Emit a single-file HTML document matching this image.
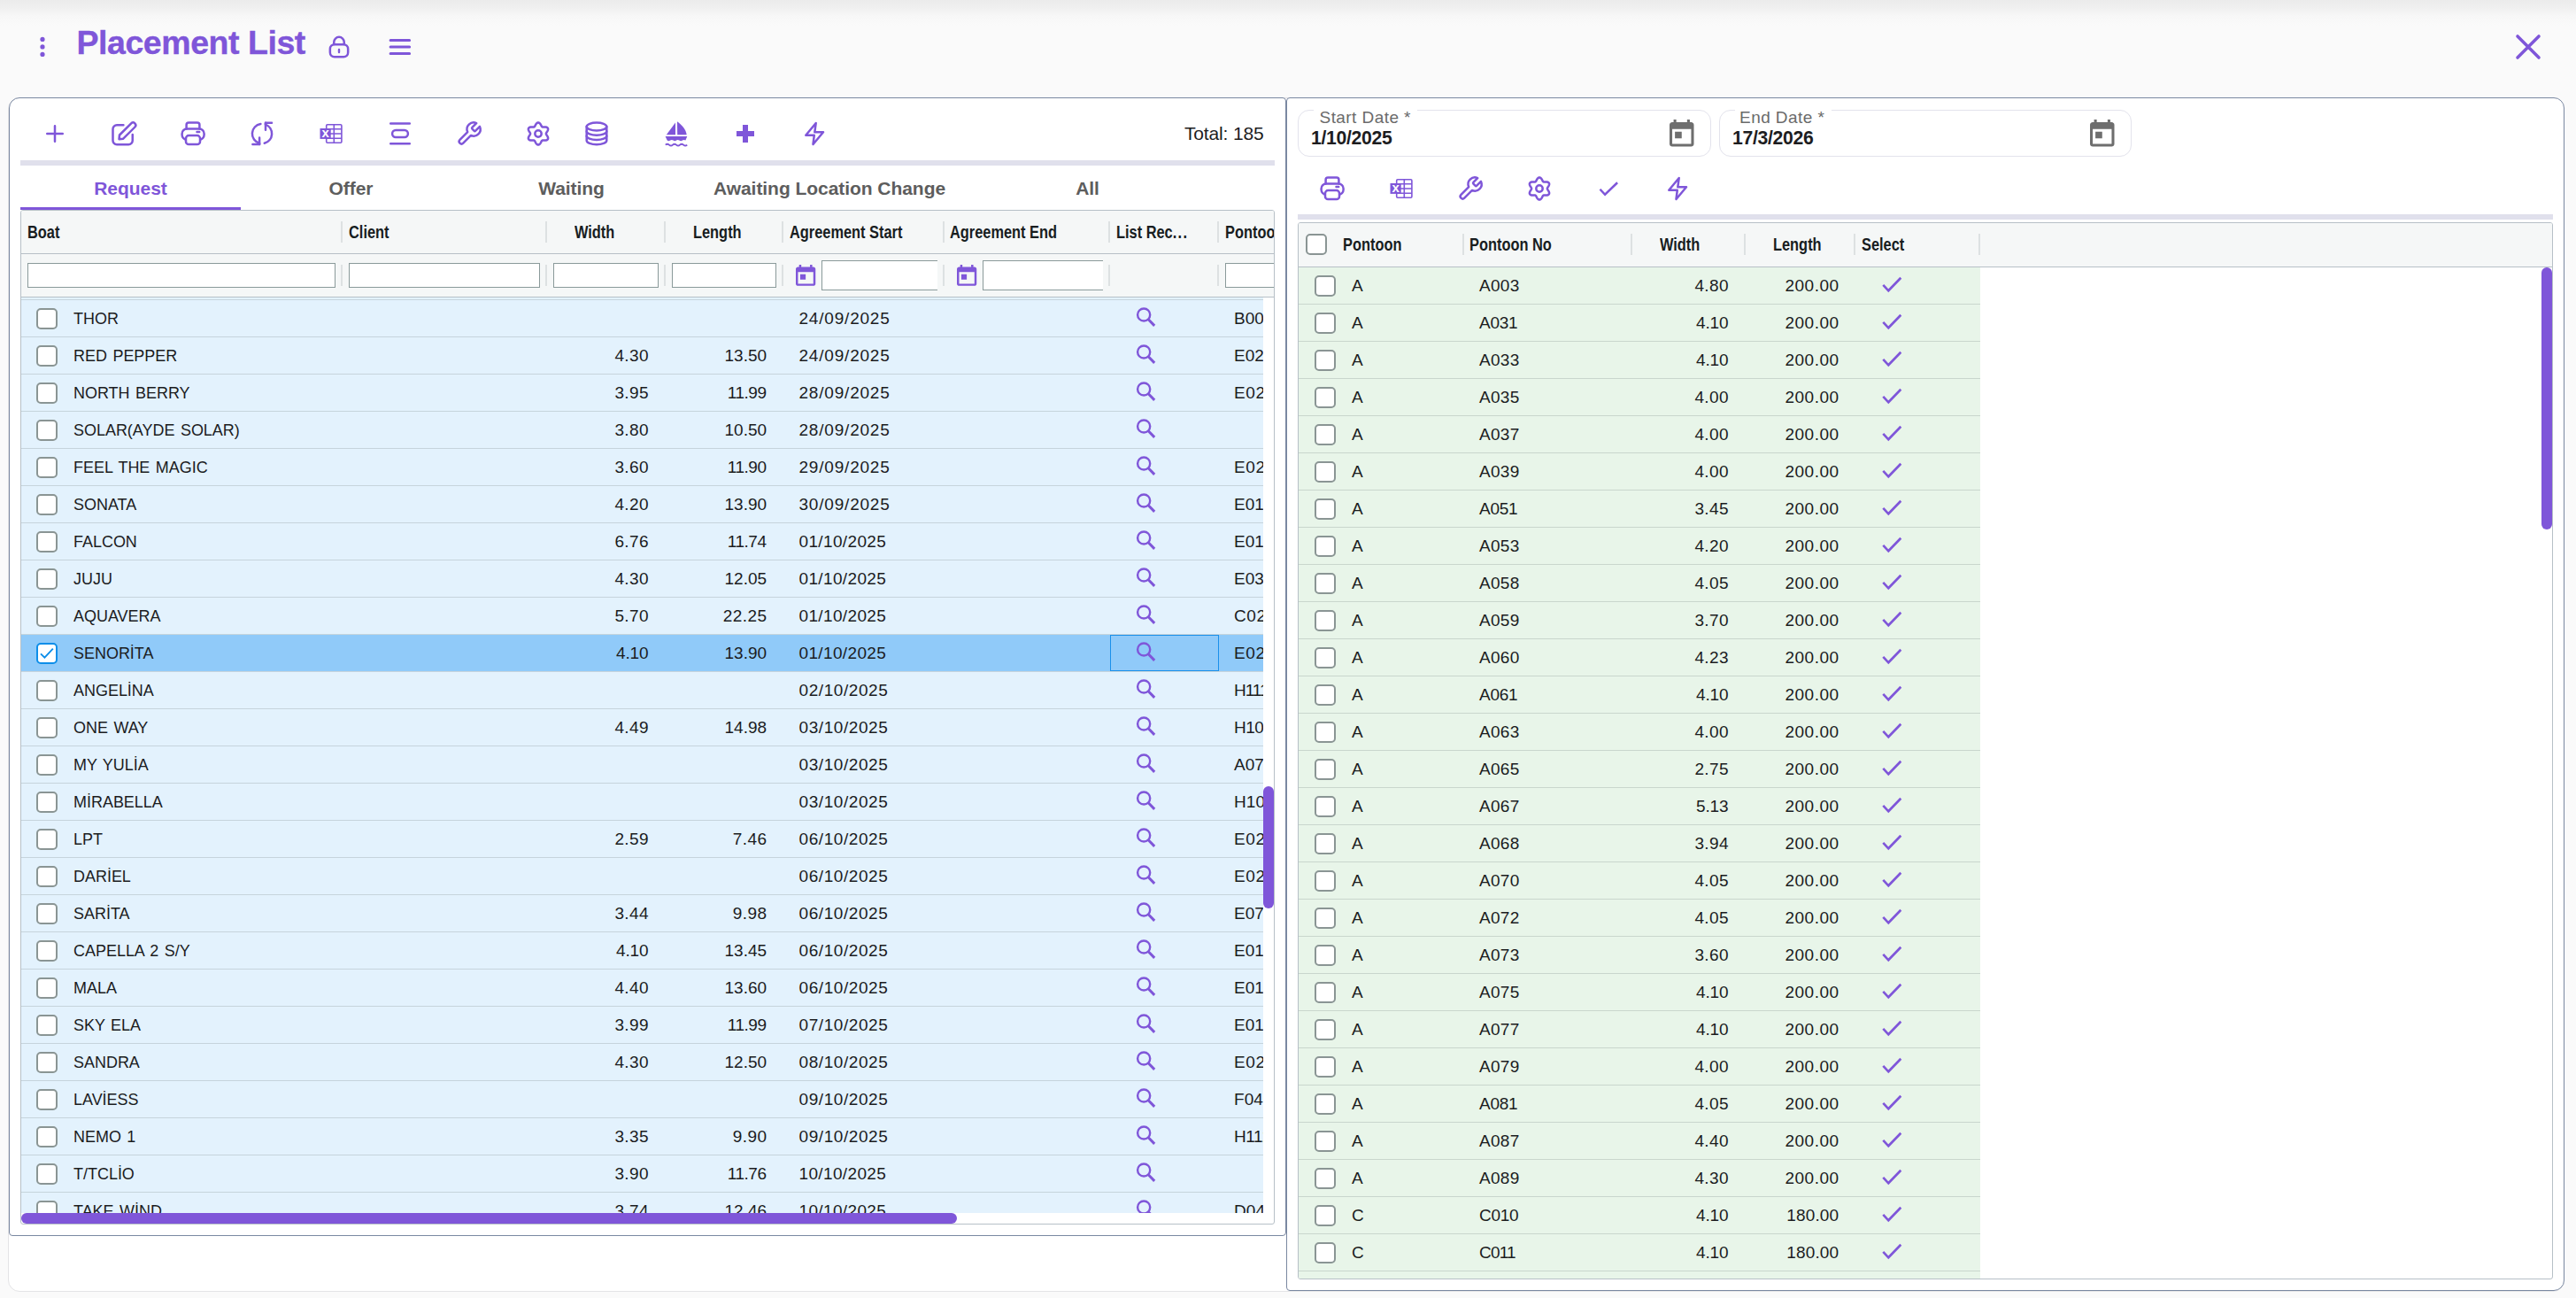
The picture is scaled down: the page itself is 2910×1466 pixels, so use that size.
<!DOCTYPE html><html lang="en"><head><meta charset="utf-8"><title>Placement List</title><style>
*{box-sizing:border-box}
html,body{margin:0;padding:0}
body{width:2910px;height:1466px;position:relative;overflow:hidden;background:#fafafa;font-family:"Liberation Sans",sans-serif;color:#1b1c1e}
.abs,.ic{position:absolute}
.ic{overflow:visible}
.topgrad{left:0;top:0;width:2910px;height:30px;background:linear-gradient(#ebebeb 0,#f0f0f0 9px,#f7f7f7 18px,#fafafa 29px)}
.title{left:86.5px;top:22px;font-size:37.5px;font-weight:bold;color:#7F56D9;letter-spacing:-0.45px;-webkit-text-stroke:.35px #7F56D9;line-height:52px;white-space:nowrap}
.outer{left:9px;top:110px;width:2888px;height:1349px;background:#fff;border:1px solid #e4e4e6;border-radius:13px}
.card{background:#fff;border:1px solid #7a88a1}
.divider{height:6px;background:#e0e0ec}
.tab{top:189.5px;height:45px;line-height:45px;text-align:center;font-size:21px;font-weight:bold;color:#5d5d5d;letter-spacing:-.05px;white-space:nowrap}
.grid{border:1px solid #b7c0c7;border-radius:3px;background:#fff;overflow:hidden}
.hdr{left:0;top:0;background:#f5f7f7;border-bottom:1px solid #b7c0c7}
.hsep{width:2px;height:24px;background:#dde1e2}
.ht{font-size:19.5px;font-weight:bold;color:#181d1f;white-space:nowrap;transform:scaleX(.84);transform-origin:0 50%;line-height:24px;height:24px}
.fin{height:28px;background:#fff;border:1px solid #8a9a9a}
.row{left:0;height:42px;border-bottom:1px solid #c6d4dc;font-size:19px;line-height:41px;white-space:nowrap}
.lrow{width:1403px;background:#e3f2fd}
.lrow.sel{background:#90caf9}
.rrow{width:770px;background:#e8f5e9;border-bottom-color:#c9d6cd}
.cb{width:24px;height:24px;border:2px solid #8a9594;border-radius:5px;background:#fff}
.cell{top:0;height:41px}
.nm{transform:scaleX(.945);transform-origin:0 50%;display:block;word-spacing:1.6px}
.num{text-align:right;letter-spacing:.4px}
.dt{letter-spacing:.8px}
.thumb{background:#7F56D9;border-radius:6px}
.dfield{top:124px;height:53px;border:1px solid #e3e3ec;border-radius:13px;background:#fff}
.dlabel{top:-5.6px;height:28px;line-height:28px;background:#fff;font-size:19px;letter-spacing:.43px;color:#6a6a6a;padding:0 0 0 6.8px;width:117.5px;white-space:nowrap}
.dval{left:14px;top:16.75px;font-size:21.2px;letter-spacing:-.3px;font-weight:bold;line-height:28px;color:#1d1d1f;white-space:nowrap}
</style></head><body>
<div class="abs topgrad"></div>
<svg class="ic" style="left:40px;top:36px" width="16" height="34" viewBox="40 36 16 34"><g fill="#7F56D9"><circle cx="48" cy="44.4" r="2.6"/><circle cx="48" cy="52.9" r="2.6"/><circle cx="48" cy="61.4" r="2.6"/></g></svg>
<div class="abs title">Placement List</div>
<svg class="ic" style="left:366px;top:36px" width="34" height="34" viewBox="366 36 34 34"><g fill="none" stroke="#7F56D9" stroke-width="2.5" stroke-linecap="round" stroke-linejoin="round" ><rect x="372.85" y="50.25" width="20.3" height="14.1" rx="5"/><path d="M377.25 50V47.6A5.75 5.75 0 0 1 388.75 47.6V50"/><path d="M383 56V59" stroke-width="2.4"/></g></svg>
<svg class="ic" style="left:436px;top:40px" width="32" height="26" viewBox="436 40 32 26"><path d="M441.1 45.6H462.6M441.1 53.1H462.6M441.1 60.6H462.6" fill="none" stroke="#7F56D9" stroke-width="3" stroke-linecap="round"/></svg>
<svg class="ic" style="left:2838px;top:35px" width="36" height="36" viewBox="2838 35 36 36"><path d="M2844 41L2868 65M2868 41L2844 65" fill="none" stroke="#7F56D9" stroke-width="3.6" stroke-linecap="round"/></svg>
<div class="abs outer"></div>
<div class="abs card" style="left:10px;top:110px;width:1443px;height:1286px;border-radius:12px 4px 4px 4px"></div>
<svg class="ic" style="left:44px;top:133px" width="36" height="36" viewBox="-18 -18 36 36" ><path d="M-8.75 0H8.75M0 -8.75V8.75" fill="none" stroke="#7F56D9" stroke-width="2.5" stroke-linecap="round" stroke-linejoin="round" /></svg>
<svg class="ic" style="left:122px;top:133px" width="36" height="36" viewBox="-18 -18 36 36" ><path d="M-0.6 -9.75H-8A4.5 4.5 0 0 0 -12.5 -5.25V7.65A4.5 4.5 0 0 0 -8 12.15H5.25A4.5 4.5 0 0 0 9.75 7.65V0.9" fill="none" stroke="#7F56D9" stroke-width="2.5" stroke-linecap="round" stroke-linejoin="round" /><path d="M-5 1.5L8.2 -11.7A2.97 2.97 0 0 1 12.4 -7.5L-0.8 5.7L-5.5 6.2Z" fill="none" stroke="#7F56D9" stroke-width="2.5" stroke-linecap="round" stroke-linejoin="round" /></svg>
<svg class="ic" style="left:200px;top:133px" width="36" height="36" viewBox="-18 -18 36 36" ><path d="M-7.4 -5.4V-10A2.5 2.5 0 0 1 -4.9 -12.5H4.9A2.5 2.5 0 0 1 7.4 -10V-5.4" fill="none" stroke="#7F56D9" stroke-width="2.5" stroke-linecap="round" stroke-linejoin="round" /><rect x="-12.4" y="-5.4" width="25" height="12.2" rx="5.5" fill="none" stroke="#7F56D9" stroke-width="2.5" stroke-linecap="round" stroke-linejoin="round" /><rect x="-8" y="2.1" width="16" height="10" rx="3.2" fill="#fff" stroke="#7F56D9" stroke-width="2.5"/><path d="M4.5 -1.9H7.2" fill="none" stroke="#7F56D9" stroke-width="2.5" stroke-linecap="round" stroke-linejoin="round" /></svg>
<svg class="ic" style="left:278px;top:133px" width="36" height="36" viewBox="-18 -18 36 36" ><path d="M-1.6 -11A11.1 11.1 0 0 0 -2.9 10.7V12.1" fill="none" stroke="#7F56D9" stroke-width="2.5" stroke-linecap="round" stroke-linejoin="round" /><path d="M-2.9 4.6V12.1H-10.6" fill="none" stroke="#7F56D9" stroke-width="2.5" stroke-linecap="round" stroke-linejoin="round" /><path d="M2.75 10.75A11.1 11.1 0 0 0 3.9 -10.4L4 -12.25" fill="none" stroke="#7F56D9" stroke-width="2.5" stroke-linecap="round" stroke-linejoin="round" /><path d="M11 -12.25H4V-4.2" fill="none" stroke="#7F56D9" stroke-width="2.5" stroke-linecap="round" stroke-linejoin="round" /></svg>
<svg class="ic" style="left:356px;top:133px" width="36" height="36" viewBox="-18 -18 36 36" ><g fill="none" stroke="#7F56D9" stroke-width="1.6"><rect x="-5.3" y="-10.3" width="17.2" height="20.5" rx="1.2"/><path d="M3.3 -10.3V10.2M-5.3 -5.2H11.9M-5.3 0H11.9M-5.3 5.2H11.9"/></g><rect x="-12.5" y="-6" width="12.2" height="11.9" fill="#7F56D9"/><text x="-6.3" y="4.1" font-family="Liberation Sans, sans-serif" font-weight="bold" font-size="15" fill="#fff" text-anchor="middle">x</text></svg>
<svg class="ic" style="left:434px;top:133px" width="36" height="36" viewBox="-18 -18 36 36" ><path d="M-10.8 -11.5H10.8M-10.8 11.3H10.8" fill="none" stroke="#7F56D9" stroke-width="2.5" stroke-linecap="round" stroke-linejoin="round" /><rect x="-8.9" y="-3.9" width="17.8" height="7.8" rx="3.9" fill="none" stroke="#7F56D9" stroke-width="2.5" stroke-linecap="round" stroke-linejoin="round" /></svg>
<svg class="ic" style="left:512px;top:133px" width="36" height="36" viewBox="-18 -18 36 36" ><g transform="translate(0.05,0.05) scale(1.26) translate(-12,-12)"><path d="M14.7 6.3a1 1 0 0 0 0 1.4l1.6 1.6a1 1 0 0 0 1.4 0l3.77-3.77a6 6 0 0 1-7.94 7.94l-6.91 6.91a2.12 2.12 0 0 1-3-3l6.91-6.91a6 6 0 0 1 7.94-7.94l-3.76 3.76z" fill="none" stroke="#7F56D9" stroke-width="1.98" stroke-linecap="round" stroke-linejoin="round"/></g></svg>
<svg class="ic" style="left:590px;top:133px" width="36" height="36" viewBox="-18 -18 36 36" ><path d="M8.90 0.00L8.93 0.31L9.03 0.63L9.19 0.97L9.40 1.32L9.65 1.70L9.92 2.11L10.20 2.54L10.47 3.00L10.71 3.48L10.90 3.97L11.04 4.46L11.11 4.94L11.10 5.41L11.00 5.85L10.83 6.25L10.57 6.60L10.23 6.90L9.83 7.15L9.38 7.33L8.89 7.46L8.37 7.53L7.83 7.56L7.30 7.56L6.79 7.54L6.30 7.51L5.85 7.48L5.43 7.48L5.06 7.51L4.74 7.58L4.45 7.71L4.20 7.89L3.97 8.14L3.76 8.44L3.56 8.80L3.35 9.21L3.13 9.65L2.90 10.10L2.63 10.56L2.34 11.01L2.01 11.42L1.66 11.79L1.27 12.09L0.86 12.31L0.43 12.45L0.00 12.50L-0.43 12.45L-0.86 12.31L-1.27 12.09L-1.66 11.79L-2.01 11.42L-2.34 11.01L-2.63 10.56L-2.90 10.10L-3.13 9.65L-3.35 9.21L-3.56 8.80L-3.76 8.44L-3.97 8.14L-4.20 7.89L-4.45 7.71L-4.74 7.58L-5.06 7.51L-5.43 7.48L-5.85 7.48L-6.30 7.51L-6.79 7.54L-7.30 7.56L-7.83 7.56L-8.37 7.53L-8.89 7.46L-9.38 7.33L-9.83 7.15L-10.23 6.90L-10.57 6.60L-10.83 6.25L-11.00 5.85L-11.10 5.41L-11.11 4.94L-11.04 4.46L-10.90 3.97L-10.71 3.48L-10.47 3.00L-10.20 2.54L-9.92 2.11L-9.65 1.70L-9.40 1.32L-9.19 0.97L-9.03 0.63L-8.93 0.31L-8.90 0.00L-8.93 -0.31L-9.03 -0.63L-9.19 -0.97L-9.40 -1.32L-9.65 -1.70L-9.92 -2.11L-10.20 -2.54L-10.47 -3.00L-10.71 -3.48L-10.90 -3.97L-11.04 -4.46L-11.11 -4.94L-11.10 -5.41L-11.00 -5.85L-10.83 -6.25L-10.57 -6.60L-10.23 -6.90L-9.83 -7.15L-9.38 -7.33L-8.89 -7.46L-8.37 -7.53L-7.83 -7.56L-7.30 -7.56L-6.79 -7.54L-6.30 -7.51L-5.85 -7.48L-5.43 -7.48L-5.06 -7.51L-4.74 -7.58L-4.45 -7.71L-4.20 -7.89L-3.97 -8.14L-3.76 -8.44L-3.56 -8.80L-3.35 -9.21L-3.13 -9.65L-2.90 -10.10L-2.63 -10.56L-2.34 -11.01L-2.01 -11.42L-1.66 -11.79L-1.27 -12.09L-0.86 -12.31L-0.43 -12.45L-0.00 -12.50L0.43 -12.45L0.86 -12.31L1.27 -12.09L1.66 -11.79L2.01 -11.42L2.34 -11.01L2.63 -10.56L2.90 -10.10L3.13 -9.65L3.35 -9.21L3.56 -8.80L3.76 -8.44L3.97 -8.14L4.20 -7.89L4.45 -7.71L4.74 -7.58L5.06 -7.51L5.43 -7.48L5.85 -7.48L6.30 -7.51L6.79 -7.54L7.30 -7.56L7.83 -7.56L8.37 -7.53L8.89 -7.46L9.38 -7.33L9.83 -7.15L10.23 -6.90L10.57 -6.60L10.83 -6.25L11.00 -5.85L11.10 -5.41L11.11 -4.94L11.04 -4.46L10.90 -3.97L10.71 -3.48L10.47 -3.00L10.20 -2.54L9.92 -2.11L9.65 -1.70L9.40 -1.32L9.19 -0.97L9.03 -0.63L8.93 -0.31Z" fill="none" stroke="#7F56D9" stroke-width="2.5" stroke-linecap="round" stroke-linejoin="round" /><circle r="3.7" fill="none" stroke="#7F56D9" stroke-width="2.5" stroke-linecap="round" stroke-linejoin="round" /></svg>
<svg class="ic" style="left:656px;top:133px" width="36" height="36" viewBox="-18 -18 36 36" ><ellipse cx="0" cy="-8" rx="11.3" ry="4.5" fill="none" stroke="#7F56D9" stroke-width="2.5" stroke-linecap="round" stroke-linejoin="round" /><path d="M-11.3 -8V7.7A11.3 4.5 0 0 0 11.3 7.7V-8" fill="none" stroke="#7F56D9" stroke-width="2.5" stroke-linecap="round" stroke-linejoin="round" /><path d="M-11.3 -2.8A11.3 4.5 0 0 0 11.3 -2.8M-11.3 2.45A11.3 4.5 0 0 0 11.3 2.45" fill="none" stroke="#7F56D9" stroke-width="2.5" stroke-linecap="round" stroke-linejoin="round" /></svg>
<svg class="ic" style="left:746px;top:133px" width="36" height="36" viewBox="-18 -18 36 36" ><g fill="#7F56D9"><path d="M-1 -12.4L-11.2 1.2H-1Z"/><path d="M1 -13.8C6.5 -10 11 -4.5 11.7 1.2H1.2Z"/><path d="M-12.4 3H12.3L10.4 7.6Q8.6 6.2 6.9 7.6T3.4 7.6T0 7.6T-3.4 7.6T-6.9 7.6T-10.3 7.6Z"/></g><path d="M-12.2 12.6Q-10.2 10.8 -8.1 12.6T-4.05 12.6T0 12.6T4.05 12.6T8.1 12.6T12.2 12.6" fill="none" stroke="#7F56D9" stroke-width="1.9"/></svg>
<svg class="ic" style="left:824px;top:133px" width="36" height="36" viewBox="-18 -18 36 36" ><path d="M-10 -3H-3V-10H3V-3H10V3H3V10H-3V3H-10Z" fill="#7F56D9"/></svg>
<svg class="ic" style="left:902px;top:133px" width="36" height="36" viewBox="-18 -18 36 36" ><path d="M-9.7 1.7L1.7 -12L0.3 -1.7H10L-1.5 12L-0.2 1.7Z" fill="none" stroke="#7F56D9" stroke-width="2.5" stroke-linecap="round" stroke-linejoin="round" /></svg>
<div class="abs" style="left:1229.5px;top:137px;width:198px;text-align:right;font-size:21px;letter-spacing:-.15px;line-height:28px;color:#1d1d1f;white-space:nowrap">Total: 185</div>
<div class="abs divider" style="left:23px;top:181px;width:1417px"></div>
<div class="abs tab" style="left:23px;width:249px;color:#7F56D9">Request</div>
<div class="abs tab" style="left:272px;width:249px">Offer</div>
<div class="abs tab" style="left:521px;width:249px">Waiting</div>
<div class="abs tab" style="left:770px;width:334px">Awaiting Location Change</div>
<div class="abs tab" style="left:1104px;width:249px">All</div>
<div class="abs" style="left:23px;top:234px;width:249px;height:3px;background:#7F56D9"></div>
<div class="abs grid" style="left:23px;top:237px;width:1417px;height:1146px">
<div class="abs hdr" style="width:1415px;height:49px"></div>
<div class="abs hdr" style="top:49px;width:1415px;height:49px"></div>
<div class="abs hsep" style="left:361px;top:12px"></div>
<div class="abs hsep" style="left:361px;top:61px"></div>
<div class="abs hsep" style="left:592px;top:12px"></div>
<div class="abs hsep" style="left:592px;top:61px"></div>
<div class="abs hsep" style="left:725.5px;top:12px"></div>
<div class="abs hsep" style="left:725.5px;top:61px"></div>
<div class="abs hsep" style="left:859px;top:12px"></div>
<div class="abs hsep" style="left:859px;top:61px"></div>
<div class="abs hsep" style="left:1040.5px;top:12px"></div>
<div class="abs hsep" style="left:1040.5px;top:61px"></div>
<div class="abs hsep" style="left:1228px;top:12px"></div>
<div class="abs hsep" style="left:1228px;top:61px"></div>
<div class="abs hsep" style="left:1351.25px;top:12px"></div>
<div class="abs hsep" style="left:1351.25px;top:61px"></div>
<div class="abs ht" style="left:6.95px;top:12px">Boat</div>
<div class="abs ht" style="left:369.95px;top:12px">Client</div>
<div class="abs ht" style="left:624.7px;top:12px">Width</div>
<div class="abs ht" style="left:758.7px;top:12px">Length</div>
<div class="abs ht" style="left:868.2px;top:12px">Agreement Start</div>
<div class="abs ht" style="left:1049.45px;top:12px">Agreement End</div>
<div class="abs ht" style="left:1236.95px;top:12px">List Rec<span style="letter-spacing:1.6px">...</span></div>
<div class="abs ht" style="left:1359.95px;top:12px">Pontoon</div>
<div class="abs fin" style="left:7px;top:59px;width:348px"></div>
<div class="abs fin" style="left:370px;top:59px;width:216px"></div>
<div class="abs fin" style="left:601px;top:59px;width:119px"></div>
<div class="abs fin" style="left:735px;top:59px;width:118px"></div>
<div class="abs fin" style="left:1360px;top:59px;width:80px"></div>
<div class="abs fin" style="left:904px;top:56px;width:131px;height:34px;border-right:none"></div>
<div class="abs fin" style="left:1086px;top:56px;width:136px;height:34px;border-right:none"></div>
<svg class="ic" style="left:874.75px;top:60.75px" width="22.25" height="23.75" viewBox="0 0 22.25 23.75"><g transform="scale(1.2361,1.1875) translate(-3,-1)"><path d="M19 3h-1V1h-2v2H8V1H6v2H5c-1.11 0-1.99.9-1.99 2L3 19c0 1.1.89 2 2 2h14c1.1 0 2-.9 2-2V5c0-1.1-.9-2-2-2zm0 16H5V8h14v11zM7 10h5v5H7z" fill="#7F56D9"/></g></svg>
<svg class="ic" style="left:1056.5px;top:60.75px" width="22.25" height="23.75" viewBox="0 0 22.25 23.75"><g transform="scale(1.2361,1.1875) translate(-3,-1)"><path d="M19 3h-1V1h-2v2H8V1H6v2H5c-1.11 0-1.99.9-1.99 2L3 19c0 1.1.89 2 2 2h14c1.1 0 2-.9 2-2V5c0-1.1-.9-2-2-2zm0 16H5V8h14v11zM7 10h5v5H7z" fill="#7F56D9"/></g></svg>
<div class="abs" style="left:0;top:98px;width:1403px;height:1034px;overflow:hidden">
<div class="abs row lrow" style="top:-39px"></div>
<div class="abs row lrow" style="top:3px">
<div class="abs cb" style="left:17px;top:9px"></div>
<div class="abs cell" style="left:58.7px"><span class="nm">THOR</span></div>
<div class="abs cell dt" style="left:878.5px;letter-spacing:0.80px">24/09/2025</div>
<svg class="ic" style="left:1256px;top:6px" width="30" height="30" viewBox="0 0 30 30"><circle cx="12.15" cy="10.5" r="7.05" fill="none" stroke="#7F56D9" stroke-width="2.4"/><path d="M17.0 15.5L24.2 22.9" stroke="#7F56D9" stroke-width="3" fill="none"/></svg>
<div class="abs cell" style="left:1370px;letter-spacing:0.05px">B001</div>
</div>
<div class="abs row lrow" style="top:45px">
<div class="abs cb" style="left:17px;top:9px"></div>
<div class="abs cell" style="left:58.7px"><span class="nm">RED PEPPER</span></div>
<div class="abs cell num" style="left:593px;width:116.00px;letter-spacing:0.40px">4.30</div>
<div class="abs cell num" style="left:726px;width:115.96px;letter-spacing:-0.04px">13.50</div>
<div class="abs cell dt" style="left:878.5px;letter-spacing:0.80px">24/09/2025</div>
<svg class="ic" style="left:1256px;top:6px" width="30" height="30" viewBox="0 0 30 30"><circle cx="12.15" cy="10.5" r="7.05" fill="none" stroke="#7F56D9" stroke-width="2.4"/><path d="M17.0 15.5L24.2 22.9" stroke="#7F56D9" stroke-width="3" fill="none"/></svg>
<div class="abs cell" style="left:1370px;letter-spacing:0.05px">E021</div>
</div>
<div class="abs row lrow" style="top:87px">
<div class="abs cb" style="left:17px;top:9px"></div>
<div class="abs cell" style="left:58.7px"><span class="nm">NORTH BERRY</span></div>
<div class="abs cell num" style="left:593px;width:116.00px;letter-spacing:0.40px">3.95</div>
<div class="abs cell num" style="left:726px;width:115.52px;letter-spacing:-0.48px">11.99</div>
<div class="abs cell dt" style="left:878.5px;letter-spacing:0.80px">28/09/2025</div>
<svg class="ic" style="left:1256px;top:6px" width="30" height="30" viewBox="0 0 30 30"><circle cx="12.15" cy="10.5" r="7.05" fill="none" stroke="#7F56D9" stroke-width="2.4"/><path d="M17.0 15.5L24.2 22.9" stroke="#7F56D9" stroke-width="3" fill="none"/></svg>
<div class="abs cell" style="left:1370px;letter-spacing:0.60px">E023</div>
</div>
<div class="abs row lrow" style="top:129px">
<div class="abs cb" style="left:17px;top:9px"></div>
<div class="abs cell" style="left:58.7px"><span class="nm">SOLAR(AYDE SOLAR)</span></div>
<div class="abs cell num" style="left:593px;width:116.00px;letter-spacing:0.40px">3.80</div>
<div class="abs cell num" style="left:726px;width:115.96px;letter-spacing:-0.04px">10.50</div>
<div class="abs cell dt" style="left:878.5px;letter-spacing:0.80px">28/09/2025</div>
<svg class="ic" style="left:1256px;top:6px" width="30" height="30" viewBox="0 0 30 30"><circle cx="12.15" cy="10.5" r="7.05" fill="none" stroke="#7F56D9" stroke-width="2.4"/><path d="M17.0 15.5L24.2 22.9" stroke="#7F56D9" stroke-width="3" fill="none"/></svg>
</div>
<div class="abs row lrow" style="top:171px">
<div class="abs cb" style="left:17px;top:9px"></div>
<div class="abs cell" style="left:58.7px"><span class="nm">FEEL THE MAGIC</span></div>
<div class="abs cell num" style="left:593px;width:116.00px;letter-spacing:0.40px">3.60</div>
<div class="abs cell num" style="left:726px;width:115.52px;letter-spacing:-0.48px">11.90</div>
<div class="abs cell dt" style="left:878.5px;letter-spacing:0.80px">29/09/2025</div>
<svg class="ic" style="left:1256px;top:6px" width="30" height="30" viewBox="0 0 30 30"><circle cx="12.15" cy="10.5" r="7.05" fill="none" stroke="#7F56D9" stroke-width="2.4"/><path d="M17.0 15.5L24.2 22.9" stroke="#7F56D9" stroke-width="3" fill="none"/></svg>
<div class="abs cell" style="left:1370px;letter-spacing:0.60px">E025</div>
</div>
<div class="abs row lrow" style="top:213px">
<div class="abs cb" style="left:17px;top:9px"></div>
<div class="abs cell" style="left:58.7px"><span class="nm">SONATA</span></div>
<div class="abs cell num" style="left:593px;width:116.00px;letter-spacing:0.40px">4.20</div>
<div class="abs cell num" style="left:726px;width:115.96px;letter-spacing:-0.04px">13.90</div>
<div class="abs cell dt" style="left:878.5px;letter-spacing:0.80px">30/09/2025</div>
<svg class="ic" style="left:1256px;top:6px" width="30" height="30" viewBox="0 0 30 30"><circle cx="12.15" cy="10.5" r="7.05" fill="none" stroke="#7F56D9" stroke-width="2.4"/><path d="M17.0 15.5L24.2 22.9" stroke="#7F56D9" stroke-width="3" fill="none"/></svg>
<div class="abs cell" style="left:1370px;letter-spacing:0.05px">E014</div>
</div>
<div class="abs row lrow" style="top:255px">
<div class="abs cb" style="left:17px;top:9px"></div>
<div class="abs cell" style="left:58.7px"><span class="nm">FALCON</span></div>
<div class="abs cell num" style="left:593px;width:116.00px;letter-spacing:0.40px">6.76</div>
<div class="abs cell num" style="left:726px;width:115.52px;letter-spacing:-0.48px">11.74</div>
<div class="abs cell dt" style="left:878.5px;letter-spacing:0.36px">01/10/2025</div>
<svg class="ic" style="left:1256px;top:6px" width="30" height="30" viewBox="0 0 30 30"><circle cx="12.15" cy="10.5" r="7.05" fill="none" stroke="#7F56D9" stroke-width="2.4"/><path d="M17.0 15.5L24.2 22.9" stroke="#7F56D9" stroke-width="3" fill="none"/></svg>
<div class="abs cell" style="left:1370px;letter-spacing:0.05px">E016</div>
</div>
<div class="abs row lrow" style="top:297px">
<div class="abs cb" style="left:17px;top:9px"></div>
<div class="abs cell" style="left:58.7px"><span class="nm">JUJU</span></div>
<div class="abs cell num" style="left:593px;width:116.00px;letter-spacing:0.40px">4.30</div>
<div class="abs cell num" style="left:726px;width:115.96px;letter-spacing:-0.04px">12.05</div>
<div class="abs cell dt" style="left:878.5px;letter-spacing:0.36px">01/10/2025</div>
<svg class="ic" style="left:1256px;top:6px" width="30" height="30" viewBox="0 0 30 30"><circle cx="12.15" cy="10.5" r="7.05" fill="none" stroke="#7F56D9" stroke-width="2.4"/><path d="M17.0 15.5L24.2 22.9" stroke="#7F56D9" stroke-width="3" fill="none"/></svg>
<div class="abs cell" style="left:1370px;letter-spacing:0.05px">E031</div>
</div>
<div class="abs row lrow" style="top:339px">
<div class="abs cb" style="left:17px;top:9px"></div>
<div class="abs cell" style="left:58.7px"><span class="nm">AQUAVERA</span></div>
<div class="abs cell num" style="left:593px;width:116.00px;letter-spacing:0.40px">5.70</div>
<div class="abs cell num" style="left:726px;width:116.40px;letter-spacing:0.40px">22.25</div>
<div class="abs cell dt" style="left:878.5px;letter-spacing:0.36px">01/10/2025</div>
<svg class="ic" style="left:1256px;top:6px" width="30" height="30" viewBox="0 0 30 30"><circle cx="12.15" cy="10.5" r="7.05" fill="none" stroke="#7F56D9" stroke-width="2.4"/><path d="M17.0 15.5L24.2 22.9" stroke="#7F56D9" stroke-width="3" fill="none"/></svg>
<div class="abs cell" style="left:1370px;letter-spacing:0.60px">C022</div>
</div>
<div class="abs row lrow sel" style="top:381px">
<div class="abs cb" style="left:17px;top:9px;border-color:#0d8ee9"></div><svg class="ic" style="left:17px;top:9px" width="24" height="24" viewBox="0 0 24 24"><path d="M5 12.3L9.4 16.75L18.85 6.7" fill="none" stroke="#0d8ee9" stroke-width="1.9"/></svg>
<div class="abs" style="left:1230px;top:0;width:123px;height:41px;border:1px solid #1a90ea"></div>
<div class="abs cell" style="left:58.7px"><span class="nm">SENORİTA</span></div>
<div class="abs cell num" style="left:593px;width:115.45px;letter-spacing:-0.15px">4.10</div>
<div class="abs cell num" style="left:726px;width:115.96px;letter-spacing:-0.04px">13.90</div>
<div class="abs cell dt" style="left:878.5px;letter-spacing:0.36px">01/10/2025</div>
<svg class="ic" style="left:1256px;top:6px" width="30" height="30" viewBox="0 0 30 30"><circle cx="12.15" cy="10.5" r="7.05" fill="none" stroke="#7F56D9" stroke-width="2.4"/><path d="M17.0 15.5L24.2 22.9" stroke="#7F56D9" stroke-width="3" fill="none"/></svg>
<div class="abs cell" style="left:1370px;letter-spacing:0.60px">E027</div>
</div>
<div class="abs row lrow" style="top:423px">
<div class="abs cb" style="left:17px;top:9px"></div>
<div class="abs cell" style="left:58.7px"><span class="nm">ANGELİNA</span></div>
<div class="abs cell dt" style="left:878.5px;letter-spacing:0.58px">02/10/2025</div>
<svg class="ic" style="left:1256px;top:6px" width="30" height="30" viewBox="0 0 30 30"><circle cx="12.15" cy="10.5" r="7.05" fill="none" stroke="#7F56D9" stroke-width="2.4"/><path d="M17.0 15.5L24.2 22.9" stroke="#7F56D9" stroke-width="3" fill="none"/></svg>
<div class="abs cell" style="left:1370px;letter-spacing:-1.05px">H111</div>
</div>
<div class="abs row lrow" style="top:465px">
<div class="abs cb" style="left:17px;top:9px"></div>
<div class="abs cell" style="left:58.7px"><span class="nm">ONE WAY</span></div>
<div class="abs cell num" style="left:593px;width:116.00px;letter-spacing:0.40px">4.49</div>
<div class="abs cell num" style="left:726px;width:115.96px;letter-spacing:-0.04px">14.98</div>
<div class="abs cell dt" style="left:878.5px;letter-spacing:0.58px">03/10/2025</div>
<svg class="ic" style="left:1256px;top:6px" width="30" height="30" viewBox="0 0 30 30"><circle cx="12.15" cy="10.5" r="7.05" fill="none" stroke="#7F56D9" stroke-width="2.4"/><path d="M17.0 15.5L24.2 22.9" stroke="#7F56D9" stroke-width="3" fill="none"/></svg>
<div class="abs cell" style="left:1370px;letter-spacing:-0.50px">H101</div>
</div>
<div class="abs row lrow" style="top:507px">
<div class="abs cb" style="left:17px;top:9px"></div>
<div class="abs cell" style="left:58.7px"><span class="nm">MY YULİA</span></div>
<div class="abs cell dt" style="left:878.5px;letter-spacing:0.58px">03/10/2025</div>
<svg class="ic" style="left:1256px;top:6px" width="30" height="30" viewBox="0 0 30 30"><circle cx="12.15" cy="10.5" r="7.05" fill="none" stroke="#7F56D9" stroke-width="2.4"/><path d="M17.0 15.5L24.2 22.9" stroke="#7F56D9" stroke-width="3" fill="none"/></svg>
<div class="abs cell" style="left:1370px;letter-spacing:0.05px">A071</div>
</div>
<div class="abs row lrow" style="top:549px">
<div class="abs cb" style="left:17px;top:9px"></div>
<div class="abs cell" style="left:58.7px"><span class="nm">MİRABELLA</span></div>
<div class="abs cell dt" style="left:878.5px;letter-spacing:0.58px">03/10/2025</div>
<svg class="ic" style="left:1256px;top:6px" width="30" height="30" viewBox="0 0 30 30"><circle cx="12.15" cy="10.5" r="7.05" fill="none" stroke="#7F56D9" stroke-width="2.4"/><path d="M17.0 15.5L24.2 22.9" stroke="#7F56D9" stroke-width="3" fill="none"/></svg>
<div class="abs cell" style="left:1370px;letter-spacing:0.05px">H103</div>
</div>
<div class="abs row lrow" style="top:591px">
<div class="abs cb" style="left:17px;top:9px"></div>
<div class="abs cell" style="left:58.7px"><span class="nm">LPT</span></div>
<div class="abs cell num" style="left:593px;width:116.00px;letter-spacing:0.40px">2.59</div>
<div class="abs cell num" style="left:726px;width:116.40px;letter-spacing:0.40px">7.46</div>
<div class="abs cell dt" style="left:878.5px;letter-spacing:0.58px">06/10/2025</div>
<svg class="ic" style="left:1256px;top:6px" width="30" height="30" viewBox="0 0 30 30"><circle cx="12.15" cy="10.5" r="7.05" fill="none" stroke="#7F56D9" stroke-width="2.4"/><path d="M17.0 15.5L24.2 22.9" stroke="#7F56D9" stroke-width="3" fill="none"/></svg>
<div class="abs cell" style="left:1370px;letter-spacing:0.60px">E022</div>
</div>
<div class="abs row lrow" style="top:633px">
<div class="abs cb" style="left:17px;top:9px"></div>
<div class="abs cell" style="left:58.7px"><span class="nm">DARİEL</span></div>
<div class="abs cell dt" style="left:878.5px;letter-spacing:0.58px">06/10/2025</div>
<svg class="ic" style="left:1256px;top:6px" width="30" height="30" viewBox="0 0 30 30"><circle cx="12.15" cy="10.5" r="7.05" fill="none" stroke="#7F56D9" stroke-width="2.4"/><path d="M17.0 15.5L24.2 22.9" stroke="#7F56D9" stroke-width="3" fill="none"/></svg>
<div class="abs cell" style="left:1370px;letter-spacing:0.60px">E024</div>
</div>
<div class="abs row lrow" style="top:675px">
<div class="abs cb" style="left:17px;top:9px"></div>
<div class="abs cell" style="left:58.7px"><span class="nm">SARİTA</span></div>
<div class="abs cell num" style="left:593px;width:116.00px;letter-spacing:0.40px">3.44</div>
<div class="abs cell num" style="left:726px;width:116.40px;letter-spacing:0.40px">9.98</div>
<div class="abs cell dt" style="left:878.5px;letter-spacing:0.58px">06/10/2025</div>
<svg class="ic" style="left:1256px;top:6px" width="30" height="30" viewBox="0 0 30 30"><circle cx="12.15" cy="10.5" r="7.05" fill="none" stroke="#7F56D9" stroke-width="2.4"/><path d="M17.0 15.5L24.2 22.9" stroke="#7F56D9" stroke-width="3" fill="none"/></svg>
<div class="abs cell" style="left:1370px;letter-spacing:0.05px">E071</div>
</div>
<div class="abs row lrow" style="top:717px">
<div class="abs cb" style="left:17px;top:9px"></div>
<div class="abs cell" style="left:58.7px"><span class="nm">CAPELLA 2 S/Y</span></div>
<div class="abs cell num" style="left:593px;width:115.45px;letter-spacing:-0.15px">4.10</div>
<div class="abs cell num" style="left:726px;width:115.96px;letter-spacing:-0.04px">13.45</div>
<div class="abs cell dt" style="left:878.5px;letter-spacing:0.58px">06/10/2025</div>
<svg class="ic" style="left:1256px;top:6px" width="30" height="30" viewBox="0 0 30 30"><circle cx="12.15" cy="10.5" r="7.05" fill="none" stroke="#7F56D9" stroke-width="2.4"/><path d="M17.0 15.5L24.2 22.9" stroke="#7F56D9" stroke-width="3" fill="none"/></svg>
<div class="abs cell" style="left:1370px;letter-spacing:0.05px">E019</div>
</div>
<div class="abs row lrow" style="top:759px">
<div class="abs cb" style="left:17px;top:9px"></div>
<div class="abs cell" style="left:58.7px"><span class="nm">MALA</span></div>
<div class="abs cell num" style="left:593px;width:116.00px;letter-spacing:0.40px">4.40</div>
<div class="abs cell num" style="left:726px;width:115.96px;letter-spacing:-0.04px">13.60</div>
<div class="abs cell dt" style="left:878.5px;letter-spacing:0.58px">06/10/2025</div>
<svg class="ic" style="left:1256px;top:6px" width="30" height="30" viewBox="0 0 30 30"><circle cx="12.15" cy="10.5" r="7.05" fill="none" stroke="#7F56D9" stroke-width="2.4"/><path d="M17.0 15.5L24.2 22.9" stroke="#7F56D9" stroke-width="3" fill="none"/></svg>
<div class="abs cell" style="left:1370px;letter-spacing:0.05px">E016</div>
</div>
<div class="abs row lrow" style="top:801px">
<div class="abs cb" style="left:17px;top:9px"></div>
<div class="abs cell" style="left:58.7px"><span class="nm">SKY ELA</span></div>
<div class="abs cell num" style="left:593px;width:116.00px;letter-spacing:0.40px">3.99</div>
<div class="abs cell num" style="left:726px;width:115.52px;letter-spacing:-0.48px">11.99</div>
<div class="abs cell dt" style="left:878.5px;letter-spacing:0.58px">07/10/2025</div>
<svg class="ic" style="left:1256px;top:6px" width="30" height="30" viewBox="0 0 30 30"><circle cx="12.15" cy="10.5" r="7.05" fill="none" stroke="#7F56D9" stroke-width="2.4"/><path d="M17.0 15.5L24.2 22.9" stroke="#7F56D9" stroke-width="3" fill="none"/></svg>
<div class="abs cell" style="left:1370px;letter-spacing:0.05px">E017</div>
</div>
<div class="abs row lrow" style="top:843px">
<div class="abs cb" style="left:17px;top:9px"></div>
<div class="abs cell" style="left:58.7px"><span class="nm">SANDRA</span></div>
<div class="abs cell num" style="left:593px;width:116.00px;letter-spacing:0.40px">4.30</div>
<div class="abs cell num" style="left:726px;width:115.96px;letter-spacing:-0.04px">12.50</div>
<div class="abs cell dt" style="left:878.5px;letter-spacing:0.58px">08/10/2025</div>
<svg class="ic" style="left:1256px;top:6px" width="30" height="30" viewBox="0 0 30 30"><circle cx="12.15" cy="10.5" r="7.05" fill="none" stroke="#7F56D9" stroke-width="2.4"/><path d="M17.0 15.5L24.2 22.9" stroke="#7F56D9" stroke-width="3" fill="none"/></svg>
<div class="abs cell" style="left:1370px;letter-spacing:0.60px">E026</div>
</div>
<div class="abs row lrow" style="top:885px">
<div class="abs cb" style="left:17px;top:9px"></div>
<div class="abs cell" style="left:58.7px"><span class="nm">LAVİESS</span></div>
<div class="abs cell dt" style="left:878.5px;letter-spacing:0.58px">09/10/2025</div>
<svg class="ic" style="left:1256px;top:6px" width="30" height="30" viewBox="0 0 30 30"><circle cx="12.15" cy="10.5" r="7.05" fill="none" stroke="#7F56D9" stroke-width="2.4"/><path d="M17.0 15.5L24.2 22.9" stroke="#7F56D9" stroke-width="3" fill="none"/></svg>
<div class="abs cell" style="left:1370px;letter-spacing:0.05px">F041</div>
</div>
<div class="abs row lrow" style="top:927px">
<div class="abs cb" style="left:17px;top:9px"></div>
<div class="abs cell" style="left:58.7px"><span class="nm">NEMO 1</span></div>
<div class="abs cell num" style="left:593px;width:116.00px;letter-spacing:0.40px">3.35</div>
<div class="abs cell num" style="left:726px;width:116.40px;letter-spacing:0.40px">9.90</div>
<div class="abs cell dt" style="left:878.5px;letter-spacing:0.58px">09/10/2025</div>
<svg class="ic" style="left:1256px;top:6px" width="30" height="30" viewBox="0 0 30 30"><circle cx="12.15" cy="10.5" r="7.05" fill="none" stroke="#7F56D9" stroke-width="2.4"/><path d="M17.0 15.5L24.2 22.9" stroke="#7F56D9" stroke-width="3" fill="none"/></svg>
<div class="abs cell" style="left:1370px;letter-spacing:-0.50px">H112</div>
</div>
<div class="abs row lrow" style="top:969px">
<div class="abs cb" style="left:17px;top:9px"></div>
<div class="abs cell" style="left:58.7px"><span class="nm">T/TCLİO</span></div>
<div class="abs cell num" style="left:593px;width:116.00px;letter-spacing:0.40px">3.90</div>
<div class="abs cell num" style="left:726px;width:115.52px;letter-spacing:-0.48px">11.76</div>
<div class="abs cell dt" style="left:878.5px;letter-spacing:0.36px">10/10/2025</div>
<svg class="ic" style="left:1256px;top:6px" width="30" height="30" viewBox="0 0 30 30"><circle cx="12.15" cy="10.5" r="7.05" fill="none" stroke="#7F56D9" stroke-width="2.4"/><path d="M17.0 15.5L24.2 22.9" stroke="#7F56D9" stroke-width="3" fill="none"/></svg>
</div>
<div class="abs row lrow" style="top:1011px">
<div class="abs cb" style="left:17px;top:9px"></div>
<div class="abs cell" style="left:58.7px"><span class="nm">TAKE WİND</span></div>
<div class="abs cell num" style="left:593px;width:116.00px;letter-spacing:0.40px">3.74</div>
<div class="abs cell num" style="left:726px;width:115.96px;letter-spacing:-0.04px">12.46</div>
<div class="abs cell dt" style="left:878.5px;letter-spacing:0.36px">10/10/2025</div>
<svg class="ic" style="left:1256px;top:6px" width="30" height="30" viewBox="0 0 30 30"><circle cx="12.15" cy="10.5" r="7.05" fill="none" stroke="#7F56D9" stroke-width="2.4"/><path d="M17.0 15.5L24.2 22.9" stroke="#7F56D9" stroke-width="3" fill="none"/></svg>
<div class="abs cell" style="left:1370px;letter-spacing:0.05px">D041</div>
</div>
</div>
<div class="abs thumb" style="left:1403px;top:650px;width:12px;height:138px"></div>
<div class="abs thumb" style="left:0;top:1132px;width:1057px;height:12px"></div>
</div>
<div class="abs card" style="left:1453px;top:110px;width:1444px;height:1348px;border-radius:4px 12px 12px 4px"></div>
<div class="abs dfield" style="left:1466px;width:467px"><div class="abs dlabel" style="left:16.75px;width:117.5px;padding-left:6.8px">Start Date *</div><div class="abs dval">1/10/2025</div></div>
<svg class="ic" style="left:1886px;top:135px" width="27.5" height="30.5" viewBox="0 0 27.5 30.5"><g transform="scale(1.5278,1.5250) translate(-3,-1)"><path d="M19 3h-1V1h-2v2H8V1H6v2H5c-1.11 0-1.99.9-1.99 2L3 19c0 1.1.89 2 2 2h14c1.1 0 2-.9 2-2V5c0-1.1-.9-2-2-2zm0 16H5V8h14v11zM7 10h5v5H7z" fill="#6e6e6e"/></g></svg>
<div class="abs dfield" style="left:1942px;width:466px"><div class="abs dlabel" style="left:16.75px;width:108.75px;padding-left:5.3px">End Date *</div><div class="abs dval">17/3/2026</div></div>
<svg class="ic" style="left:2361px;top:135px" width="27.5" height="30.5" viewBox="0 0 27.5 30.5"><g transform="scale(1.5278,1.5250) translate(-3,-1)"><path d="M19 3h-1V1h-2v2H8V1H6v2H5c-1.11 0-1.99.9-1.99 2L3 19c0 1.1.89 2 2 2h14c1.1 0 2-.9 2-2V5c0-1.1-.9-2-2-2zm0 16H5V8h14v11zM7 10h5v5H7z" fill="#6e6e6e"/></g></svg>
<svg class="ic" style="left:1487px;top:195px" width="36" height="36" viewBox="-18 -18 36 36" ><path d="M-7.4 -5.4V-10A2.5 2.5 0 0 1 -4.9 -12.5H4.9A2.5 2.5 0 0 1 7.4 -10V-5.4" fill="none" stroke="#7F56D9" stroke-width="2.5" stroke-linecap="round" stroke-linejoin="round" /><rect x="-12.4" y="-5.4" width="25" height="12.2" rx="5.5" fill="none" stroke="#7F56D9" stroke-width="2.5" stroke-linecap="round" stroke-linejoin="round" /><rect x="-8" y="2.1" width="16" height="10" rx="3.2" fill="#fff" stroke="#7F56D9" stroke-width="2.5"/><path d="M4.5 -1.9H7.2" fill="none" stroke="#7F56D9" stroke-width="2.5" stroke-linecap="round" stroke-linejoin="round" /></svg>
<svg class="ic" style="left:1565px;top:195px" width="36" height="36" viewBox="-18 -18 36 36" ><g fill="none" stroke="#7F56D9" stroke-width="1.6"><rect x="-5.3" y="-10.3" width="17.2" height="20.5" rx="1.2"/><path d="M3.3 -10.3V10.2M-5.3 -5.2H11.9M-5.3 0H11.9M-5.3 5.2H11.9"/></g><rect x="-12.5" y="-6" width="12.2" height="11.9" fill="#7F56D9"/><text x="-6.3" y="4.1" font-family="Liberation Sans, sans-serif" font-weight="bold" font-size="15" fill="#fff" text-anchor="middle">x</text></svg>
<svg class="ic" style="left:1643px;top:195px" width="36" height="36" viewBox="-18 -18 36 36" ><g transform="translate(0.05,0.05) scale(1.26) translate(-12,-12)"><path d="M14.7 6.3a1 1 0 0 0 0 1.4l1.6 1.6a1 1 0 0 0 1.4 0l3.77-3.77a6 6 0 0 1-7.94 7.94l-6.91 6.91a2.12 2.12 0 0 1-3-3l6.91-6.91a6 6 0 0 1 7.94-7.94l-3.76 3.76z" fill="none" stroke="#7F56D9" stroke-width="1.98" stroke-linecap="round" stroke-linejoin="round"/></g></svg>
<svg class="ic" style="left:1721px;top:195px" width="36" height="36" viewBox="-18 -18 36 36" ><path d="M8.90 0.00L8.93 0.31L9.03 0.63L9.19 0.97L9.40 1.32L9.65 1.70L9.92 2.11L10.20 2.54L10.47 3.00L10.71 3.48L10.90 3.97L11.04 4.46L11.11 4.94L11.10 5.41L11.00 5.85L10.83 6.25L10.57 6.60L10.23 6.90L9.83 7.15L9.38 7.33L8.89 7.46L8.37 7.53L7.83 7.56L7.30 7.56L6.79 7.54L6.30 7.51L5.85 7.48L5.43 7.48L5.06 7.51L4.74 7.58L4.45 7.71L4.20 7.89L3.97 8.14L3.76 8.44L3.56 8.80L3.35 9.21L3.13 9.65L2.90 10.10L2.63 10.56L2.34 11.01L2.01 11.42L1.66 11.79L1.27 12.09L0.86 12.31L0.43 12.45L0.00 12.50L-0.43 12.45L-0.86 12.31L-1.27 12.09L-1.66 11.79L-2.01 11.42L-2.34 11.01L-2.63 10.56L-2.90 10.10L-3.13 9.65L-3.35 9.21L-3.56 8.80L-3.76 8.44L-3.97 8.14L-4.20 7.89L-4.45 7.71L-4.74 7.58L-5.06 7.51L-5.43 7.48L-5.85 7.48L-6.30 7.51L-6.79 7.54L-7.30 7.56L-7.83 7.56L-8.37 7.53L-8.89 7.46L-9.38 7.33L-9.83 7.15L-10.23 6.90L-10.57 6.60L-10.83 6.25L-11.00 5.85L-11.10 5.41L-11.11 4.94L-11.04 4.46L-10.90 3.97L-10.71 3.48L-10.47 3.00L-10.20 2.54L-9.92 2.11L-9.65 1.70L-9.40 1.32L-9.19 0.97L-9.03 0.63L-8.93 0.31L-8.90 0.00L-8.93 -0.31L-9.03 -0.63L-9.19 -0.97L-9.40 -1.32L-9.65 -1.70L-9.92 -2.11L-10.20 -2.54L-10.47 -3.00L-10.71 -3.48L-10.90 -3.97L-11.04 -4.46L-11.11 -4.94L-11.10 -5.41L-11.00 -5.85L-10.83 -6.25L-10.57 -6.60L-10.23 -6.90L-9.83 -7.15L-9.38 -7.33L-8.89 -7.46L-8.37 -7.53L-7.83 -7.56L-7.30 -7.56L-6.79 -7.54L-6.30 -7.51L-5.85 -7.48L-5.43 -7.48L-5.06 -7.51L-4.74 -7.58L-4.45 -7.71L-4.20 -7.89L-3.97 -8.14L-3.76 -8.44L-3.56 -8.80L-3.35 -9.21L-3.13 -9.65L-2.90 -10.10L-2.63 -10.56L-2.34 -11.01L-2.01 -11.42L-1.66 -11.79L-1.27 -12.09L-0.86 -12.31L-0.43 -12.45L-0.00 -12.50L0.43 -12.45L0.86 -12.31L1.27 -12.09L1.66 -11.79L2.01 -11.42L2.34 -11.01L2.63 -10.56L2.90 -10.10L3.13 -9.65L3.35 -9.21L3.56 -8.80L3.76 -8.44L3.97 -8.14L4.20 -7.89L4.45 -7.71L4.74 -7.58L5.06 -7.51L5.43 -7.48L5.85 -7.48L6.30 -7.51L6.79 -7.54L7.30 -7.56L7.83 -7.56L8.37 -7.53L8.89 -7.46L9.38 -7.33L9.83 -7.15L10.23 -6.90L10.57 -6.60L10.83 -6.25L11.00 -5.85L11.10 -5.41L11.11 -4.94L11.04 -4.46L10.90 -3.97L10.71 -3.48L10.47 -3.00L10.20 -2.54L9.92 -2.11L9.65 -1.70L9.40 -1.32L9.19 -0.97L9.03 -0.63L8.93 -0.31Z" fill="none" stroke="#7F56D9" stroke-width="2.5" stroke-linecap="round" stroke-linejoin="round" /><circle r="3.7" fill="none" stroke="#7F56D9" stroke-width="2.5" stroke-linecap="round" stroke-linejoin="round" /></svg>
<svg class="ic" style="left:1799px;top:195px" width="36" height="36" viewBox="-18 -18 36 36" ><path d="M-9.5 0.75L-3.9 6.75L10.1 -6.75" fill="none" stroke="#7F56D9" stroke-width="2.5" stroke-linejoin="miter"/></svg>
<svg class="ic" style="left:1877px;top:195px" width="36" height="36" viewBox="-18 -18 36 36" ><path d="M-9.7 1.7L1.7 -12L0.3 -1.7H10L-1.5 12L-0.2 1.7Z" fill="none" stroke="#7F56D9" stroke-width="2.5" stroke-linecap="round" stroke-linejoin="round" /></svg>
<div class="abs divider" style="left:1466px;top:242px;width:1418px"></div>
<div class="abs grid" style="left:1466px;top:251px;width:1418px;height:1194px">
<div class="abs hdr" style="width:1416px;height:50px"></div>
<div class="abs cb" style="left:7.5px;top:12px"></div>
<div class="abs hsep" style="left:184.5px;top:12px"></div>
<div class="abs hsep" style="left:375px;top:12px"></div>
<div class="abs hsep" style="left:502.5px;top:12px"></div>
<div class="abs hsep" style="left:627px;top:12px"></div>
<div class="abs hsep" style="left:768px;top:12px"></div>
<div class="abs ht" style="left:49.7px;top:12px">Pontoon</div>
<div class="abs ht" style="left:193.45px;top:12px">Pontoon No</div>
<div class="abs ht" style="left:407.7px;top:12px">Width</div>
<div class="abs ht" style="left:535.7px;top:12px">Length</div>
<div class="abs ht" style="left:635.95px;top:12px">Select</div>
<div class="abs" style="left:0;top:50px;width:1416px;height:1142px;overflow:hidden">
<div class="abs row rrow" style="top:0px">
<div class="abs cb" style="left:17.5px;top:9px"></div>
<div class="abs cell" style="left:60px">A</div>
<div class="abs cell" style="left:204px;letter-spacing:0.30px">A003</div>
<div class="abs cell num" style="left:376px;width:110.00px;letter-spacing:0.40px">4.80</div>
<div class="abs cell num" style="left:503.5px;width:107.10px;letter-spacing:0.50px">200.00</div>
<svg class="ic" style="left:655px;top:7px" width="30" height="26" viewBox="0 0 30 26"><path d="M5.3 12.9L11.3 19.3L25.3 4.8" fill="none" stroke="#7F56D9" stroke-width="2.7" stroke-linejoin="miter"/></svg>
</div>
<div class="abs row rrow" style="top:42px">
<div class="abs cb" style="left:17.5px;top:9px"></div>
<div class="abs cell" style="left:60px">A</div>
<div class="abs cell" style="left:204px;letter-spacing:-0.25px">A031</div>
<div class="abs cell num" style="left:376px;width:109.45px;letter-spacing:-0.15px">4.10</div>
<div class="abs cell num" style="left:503.5px;width:107.10px;letter-spacing:0.50px">200.00</div>
<svg class="ic" style="left:655px;top:7px" width="30" height="26" viewBox="0 0 30 26"><path d="M5.3 12.9L11.3 19.3L25.3 4.8" fill="none" stroke="#7F56D9" stroke-width="2.7" stroke-linejoin="miter"/></svg>
</div>
<div class="abs row rrow" style="top:84px">
<div class="abs cb" style="left:17.5px;top:9px"></div>
<div class="abs cell" style="left:60px">A</div>
<div class="abs cell" style="left:204px;letter-spacing:0.30px">A033</div>
<div class="abs cell num" style="left:376px;width:109.45px;letter-spacing:-0.15px">4.10</div>
<div class="abs cell num" style="left:503.5px;width:107.10px;letter-spacing:0.50px">200.00</div>
<svg class="ic" style="left:655px;top:7px" width="30" height="26" viewBox="0 0 30 26"><path d="M5.3 12.9L11.3 19.3L25.3 4.8" fill="none" stroke="#7F56D9" stroke-width="2.7" stroke-linejoin="miter"/></svg>
</div>
<div class="abs row rrow" style="top:126px">
<div class="abs cb" style="left:17.5px;top:9px"></div>
<div class="abs cell" style="left:60px">A</div>
<div class="abs cell" style="left:204px;letter-spacing:0.30px">A035</div>
<div class="abs cell num" style="left:376px;width:110.00px;letter-spacing:0.40px">4.00</div>
<div class="abs cell num" style="left:503.5px;width:107.10px;letter-spacing:0.50px">200.00</div>
<svg class="ic" style="left:655px;top:7px" width="30" height="26" viewBox="0 0 30 26"><path d="M5.3 12.9L11.3 19.3L25.3 4.8" fill="none" stroke="#7F56D9" stroke-width="2.7" stroke-linejoin="miter"/></svg>
</div>
<div class="abs row rrow" style="top:168px">
<div class="abs cb" style="left:17.5px;top:9px"></div>
<div class="abs cell" style="left:60px">A</div>
<div class="abs cell" style="left:204px;letter-spacing:0.30px">A037</div>
<div class="abs cell num" style="left:376px;width:110.00px;letter-spacing:0.40px">4.00</div>
<div class="abs cell num" style="left:503.5px;width:107.10px;letter-spacing:0.50px">200.00</div>
<svg class="ic" style="left:655px;top:7px" width="30" height="26" viewBox="0 0 30 26"><path d="M5.3 12.9L11.3 19.3L25.3 4.8" fill="none" stroke="#7F56D9" stroke-width="2.7" stroke-linejoin="miter"/></svg>
</div>
<div class="abs row rrow" style="top:210px">
<div class="abs cb" style="left:17.5px;top:9px"></div>
<div class="abs cell" style="left:60px">A</div>
<div class="abs cell" style="left:204px;letter-spacing:0.30px">A039</div>
<div class="abs cell num" style="left:376px;width:110.00px;letter-spacing:0.40px">4.00</div>
<div class="abs cell num" style="left:503.5px;width:107.10px;letter-spacing:0.50px">200.00</div>
<svg class="ic" style="left:655px;top:7px" width="30" height="26" viewBox="0 0 30 26"><path d="M5.3 12.9L11.3 19.3L25.3 4.8" fill="none" stroke="#7F56D9" stroke-width="2.7" stroke-linejoin="miter"/></svg>
</div>
<div class="abs row rrow" style="top:252px">
<div class="abs cb" style="left:17.5px;top:9px"></div>
<div class="abs cell" style="left:60px">A</div>
<div class="abs cell" style="left:204px;letter-spacing:-0.25px">A051</div>
<div class="abs cell num" style="left:376px;width:110.00px;letter-spacing:0.40px">3.45</div>
<div class="abs cell num" style="left:503.5px;width:107.10px;letter-spacing:0.50px">200.00</div>
<svg class="ic" style="left:655px;top:7px" width="30" height="26" viewBox="0 0 30 26"><path d="M5.3 12.9L11.3 19.3L25.3 4.8" fill="none" stroke="#7F56D9" stroke-width="2.7" stroke-linejoin="miter"/></svg>
</div>
<div class="abs row rrow" style="top:294px">
<div class="abs cb" style="left:17.5px;top:9px"></div>
<div class="abs cell" style="left:60px">A</div>
<div class="abs cell" style="left:204px;letter-spacing:0.30px">A053</div>
<div class="abs cell num" style="left:376px;width:110.00px;letter-spacing:0.40px">4.20</div>
<div class="abs cell num" style="left:503.5px;width:107.10px;letter-spacing:0.50px">200.00</div>
<svg class="ic" style="left:655px;top:7px" width="30" height="26" viewBox="0 0 30 26"><path d="M5.3 12.9L11.3 19.3L25.3 4.8" fill="none" stroke="#7F56D9" stroke-width="2.7" stroke-linejoin="miter"/></svg>
</div>
<div class="abs row rrow" style="top:336px">
<div class="abs cb" style="left:17.5px;top:9px"></div>
<div class="abs cell" style="left:60px">A</div>
<div class="abs cell" style="left:204px;letter-spacing:0.30px">A058</div>
<div class="abs cell num" style="left:376px;width:110.00px;letter-spacing:0.40px">4.05</div>
<div class="abs cell num" style="left:503.5px;width:107.10px;letter-spacing:0.50px">200.00</div>
<svg class="ic" style="left:655px;top:7px" width="30" height="26" viewBox="0 0 30 26"><path d="M5.3 12.9L11.3 19.3L25.3 4.8" fill="none" stroke="#7F56D9" stroke-width="2.7" stroke-linejoin="miter"/></svg>
</div>
<div class="abs row rrow" style="top:378px">
<div class="abs cb" style="left:17.5px;top:9px"></div>
<div class="abs cell" style="left:60px">A</div>
<div class="abs cell" style="left:204px;letter-spacing:0.30px">A059</div>
<div class="abs cell num" style="left:376px;width:110.00px;letter-spacing:0.40px">3.70</div>
<div class="abs cell num" style="left:503.5px;width:107.10px;letter-spacing:0.50px">200.00</div>
<svg class="ic" style="left:655px;top:7px" width="30" height="26" viewBox="0 0 30 26"><path d="M5.3 12.9L11.3 19.3L25.3 4.8" fill="none" stroke="#7F56D9" stroke-width="2.7" stroke-linejoin="miter"/></svg>
</div>
<div class="abs row rrow" style="top:420px">
<div class="abs cb" style="left:17.5px;top:9px"></div>
<div class="abs cell" style="left:60px">A</div>
<div class="abs cell" style="left:204px;letter-spacing:0.30px">A060</div>
<div class="abs cell num" style="left:376px;width:110.00px;letter-spacing:0.40px">4.23</div>
<div class="abs cell num" style="left:503.5px;width:107.10px;letter-spacing:0.50px">200.00</div>
<svg class="ic" style="left:655px;top:7px" width="30" height="26" viewBox="0 0 30 26"><path d="M5.3 12.9L11.3 19.3L25.3 4.8" fill="none" stroke="#7F56D9" stroke-width="2.7" stroke-linejoin="miter"/></svg>
</div>
<div class="abs row rrow" style="top:462px">
<div class="abs cb" style="left:17.5px;top:9px"></div>
<div class="abs cell" style="left:60px">A</div>
<div class="abs cell" style="left:204px;letter-spacing:-0.25px">A061</div>
<div class="abs cell num" style="left:376px;width:109.45px;letter-spacing:-0.15px">4.10</div>
<div class="abs cell num" style="left:503.5px;width:107.10px;letter-spacing:0.50px">200.00</div>
<svg class="ic" style="left:655px;top:7px" width="30" height="26" viewBox="0 0 30 26"><path d="M5.3 12.9L11.3 19.3L25.3 4.8" fill="none" stroke="#7F56D9" stroke-width="2.7" stroke-linejoin="miter"/></svg>
</div>
<div class="abs row rrow" style="top:504px">
<div class="abs cb" style="left:17.5px;top:9px"></div>
<div class="abs cell" style="left:60px">A</div>
<div class="abs cell" style="left:204px;letter-spacing:0.30px">A063</div>
<div class="abs cell num" style="left:376px;width:110.00px;letter-spacing:0.40px">4.00</div>
<div class="abs cell num" style="left:503.5px;width:107.10px;letter-spacing:0.50px">200.00</div>
<svg class="ic" style="left:655px;top:7px" width="30" height="26" viewBox="0 0 30 26"><path d="M5.3 12.9L11.3 19.3L25.3 4.8" fill="none" stroke="#7F56D9" stroke-width="2.7" stroke-linejoin="miter"/></svg>
</div>
<div class="abs row rrow" style="top:546px">
<div class="abs cb" style="left:17.5px;top:9px"></div>
<div class="abs cell" style="left:60px">A</div>
<div class="abs cell" style="left:204px;letter-spacing:0.30px">A065</div>
<div class="abs cell num" style="left:376px;width:110.00px;letter-spacing:0.40px">2.75</div>
<div class="abs cell num" style="left:503.5px;width:107.10px;letter-spacing:0.50px">200.00</div>
<svg class="ic" style="left:655px;top:7px" width="30" height="26" viewBox="0 0 30 26"><path d="M5.3 12.9L11.3 19.3L25.3 4.8" fill="none" stroke="#7F56D9" stroke-width="2.7" stroke-linejoin="miter"/></svg>
</div>
<div class="abs row rrow" style="top:588px">
<div class="abs cb" style="left:17.5px;top:9px"></div>
<div class="abs cell" style="left:60px">A</div>
<div class="abs cell" style="left:204px;letter-spacing:0.30px">A067</div>
<div class="abs cell num" style="left:376px;width:109.45px;letter-spacing:-0.15px">5.13</div>
<div class="abs cell num" style="left:503.5px;width:107.10px;letter-spacing:0.50px">200.00</div>
<svg class="ic" style="left:655px;top:7px" width="30" height="26" viewBox="0 0 30 26"><path d="M5.3 12.9L11.3 19.3L25.3 4.8" fill="none" stroke="#7F56D9" stroke-width="2.7" stroke-linejoin="miter"/></svg>
</div>
<div class="abs row rrow" style="top:630px">
<div class="abs cb" style="left:17.5px;top:9px"></div>
<div class="abs cell" style="left:60px">A</div>
<div class="abs cell" style="left:204px;letter-spacing:0.30px">A068</div>
<div class="abs cell num" style="left:376px;width:110.00px;letter-spacing:0.40px">3.94</div>
<div class="abs cell num" style="left:503.5px;width:107.10px;letter-spacing:0.50px">200.00</div>
<svg class="ic" style="left:655px;top:7px" width="30" height="26" viewBox="0 0 30 26"><path d="M5.3 12.9L11.3 19.3L25.3 4.8" fill="none" stroke="#7F56D9" stroke-width="2.7" stroke-linejoin="miter"/></svg>
</div>
<div class="abs row rrow" style="top:672px">
<div class="abs cb" style="left:17.5px;top:9px"></div>
<div class="abs cell" style="left:60px">A</div>
<div class="abs cell" style="left:204px;letter-spacing:0.30px">A070</div>
<div class="abs cell num" style="left:376px;width:110.00px;letter-spacing:0.40px">4.05</div>
<div class="abs cell num" style="left:503.5px;width:107.10px;letter-spacing:0.50px">200.00</div>
<svg class="ic" style="left:655px;top:7px" width="30" height="26" viewBox="0 0 30 26"><path d="M5.3 12.9L11.3 19.3L25.3 4.8" fill="none" stroke="#7F56D9" stroke-width="2.7" stroke-linejoin="miter"/></svg>
</div>
<div class="abs row rrow" style="top:714px">
<div class="abs cb" style="left:17.5px;top:9px"></div>
<div class="abs cell" style="left:60px">A</div>
<div class="abs cell" style="left:204px;letter-spacing:0.30px">A072</div>
<div class="abs cell num" style="left:376px;width:110.00px;letter-spacing:0.40px">4.05</div>
<div class="abs cell num" style="left:503.5px;width:107.10px;letter-spacing:0.50px">200.00</div>
<svg class="ic" style="left:655px;top:7px" width="30" height="26" viewBox="0 0 30 26"><path d="M5.3 12.9L11.3 19.3L25.3 4.8" fill="none" stroke="#7F56D9" stroke-width="2.7" stroke-linejoin="miter"/></svg>
</div>
<div class="abs row rrow" style="top:756px">
<div class="abs cb" style="left:17.5px;top:9px"></div>
<div class="abs cell" style="left:60px">A</div>
<div class="abs cell" style="left:204px;letter-spacing:0.30px">A073</div>
<div class="abs cell num" style="left:376px;width:110.00px;letter-spacing:0.40px">3.60</div>
<div class="abs cell num" style="left:503.5px;width:107.10px;letter-spacing:0.50px">200.00</div>
<svg class="ic" style="left:655px;top:7px" width="30" height="26" viewBox="0 0 30 26"><path d="M5.3 12.9L11.3 19.3L25.3 4.8" fill="none" stroke="#7F56D9" stroke-width="2.7" stroke-linejoin="miter"/></svg>
</div>
<div class="abs row rrow" style="top:798px">
<div class="abs cb" style="left:17.5px;top:9px"></div>
<div class="abs cell" style="left:60px">A</div>
<div class="abs cell" style="left:204px;letter-spacing:0.30px">A075</div>
<div class="abs cell num" style="left:376px;width:109.45px;letter-spacing:-0.15px">4.10</div>
<div class="abs cell num" style="left:503.5px;width:107.10px;letter-spacing:0.50px">200.00</div>
<svg class="ic" style="left:655px;top:7px" width="30" height="26" viewBox="0 0 30 26"><path d="M5.3 12.9L11.3 19.3L25.3 4.8" fill="none" stroke="#7F56D9" stroke-width="2.7" stroke-linejoin="miter"/></svg>
</div>
<div class="abs row rrow" style="top:840px">
<div class="abs cb" style="left:17.5px;top:9px"></div>
<div class="abs cell" style="left:60px">A</div>
<div class="abs cell" style="left:204px;letter-spacing:0.30px">A077</div>
<div class="abs cell num" style="left:376px;width:109.45px;letter-spacing:-0.15px">4.10</div>
<div class="abs cell num" style="left:503.5px;width:107.10px;letter-spacing:0.50px">200.00</div>
<svg class="ic" style="left:655px;top:7px" width="30" height="26" viewBox="0 0 30 26"><path d="M5.3 12.9L11.3 19.3L25.3 4.8" fill="none" stroke="#7F56D9" stroke-width="2.7" stroke-linejoin="miter"/></svg>
</div>
<div class="abs row rrow" style="top:882px">
<div class="abs cb" style="left:17.5px;top:9px"></div>
<div class="abs cell" style="left:60px">A</div>
<div class="abs cell" style="left:204px;letter-spacing:0.30px">A079</div>
<div class="abs cell num" style="left:376px;width:110.00px;letter-spacing:0.40px">4.00</div>
<div class="abs cell num" style="left:503.5px;width:107.10px;letter-spacing:0.50px">200.00</div>
<svg class="ic" style="left:655px;top:7px" width="30" height="26" viewBox="0 0 30 26"><path d="M5.3 12.9L11.3 19.3L25.3 4.8" fill="none" stroke="#7F56D9" stroke-width="2.7" stroke-linejoin="miter"/></svg>
</div>
<div class="abs row rrow" style="top:924px">
<div class="abs cb" style="left:17.5px;top:9px"></div>
<div class="abs cell" style="left:60px">A</div>
<div class="abs cell" style="left:204px;letter-spacing:-0.25px">A081</div>
<div class="abs cell num" style="left:376px;width:110.00px;letter-spacing:0.40px">4.05</div>
<div class="abs cell num" style="left:503.5px;width:107.10px;letter-spacing:0.50px">200.00</div>
<svg class="ic" style="left:655px;top:7px" width="30" height="26" viewBox="0 0 30 26"><path d="M5.3 12.9L11.3 19.3L25.3 4.8" fill="none" stroke="#7F56D9" stroke-width="2.7" stroke-linejoin="miter"/></svg>
</div>
<div class="abs row rrow" style="top:966px">
<div class="abs cb" style="left:17.5px;top:9px"></div>
<div class="abs cell" style="left:60px">A</div>
<div class="abs cell" style="left:204px;letter-spacing:0.30px">A087</div>
<div class="abs cell num" style="left:376px;width:110.00px;letter-spacing:0.40px">4.40</div>
<div class="abs cell num" style="left:503.5px;width:107.10px;letter-spacing:0.50px">200.00</div>
<svg class="ic" style="left:655px;top:7px" width="30" height="26" viewBox="0 0 30 26"><path d="M5.3 12.9L11.3 19.3L25.3 4.8" fill="none" stroke="#7F56D9" stroke-width="2.7" stroke-linejoin="miter"/></svg>
</div>
<div class="abs row rrow" style="top:1008px">
<div class="abs cb" style="left:17.5px;top:9px"></div>
<div class="abs cell" style="left:60px">A</div>
<div class="abs cell" style="left:204px;letter-spacing:0.30px">A089</div>
<div class="abs cell num" style="left:376px;width:110.00px;letter-spacing:0.40px">4.30</div>
<div class="abs cell num" style="left:503.5px;width:107.10px;letter-spacing:0.50px">200.00</div>
<svg class="ic" style="left:655px;top:7px" width="30" height="26" viewBox="0 0 30 26"><path d="M5.3 12.9L11.3 19.3L25.3 4.8" fill="none" stroke="#7F56D9" stroke-width="2.7" stroke-linejoin="miter"/></svg>
</div>
<div class="abs row rrow" style="top:1050px">
<div class="abs cb" style="left:17.5px;top:9px"></div>
<div class="abs cell" style="left:60px">C</div>
<div class="abs cell" style="left:204px;letter-spacing:-0.25px">C010</div>
<div class="abs cell num" style="left:376px;width:109.45px;letter-spacing:-0.15px">4.10</div>
<div class="abs cell num" style="left:503.5px;width:106.73px;letter-spacing:0.13px">180.00</div>
<svg class="ic" style="left:655px;top:7px" width="30" height="26" viewBox="0 0 30 26"><path d="M5.3 12.9L11.3 19.3L25.3 4.8" fill="none" stroke="#7F56D9" stroke-width="2.7" stroke-linejoin="miter"/></svg>
</div>
<div class="abs row rrow" style="top:1092px">
<div class="abs cb" style="left:17.5px;top:9px"></div>
<div class="abs cell" style="left:60px">C</div>
<div class="abs cell" style="left:204px;letter-spacing:-0.80px">C011</div>
<div class="abs cell num" style="left:376px;width:109.45px;letter-spacing:-0.15px">4.10</div>
<div class="abs cell num" style="left:503.5px;width:106.73px;letter-spacing:0.13px">180.00</div>
<svg class="ic" style="left:655px;top:7px" width="30" height="26" viewBox="0 0 30 26"><path d="M5.3 12.9L11.3 19.3L25.3 4.8" fill="none" stroke="#7F56D9" stroke-width="2.7" stroke-linejoin="miter"/></svg>
</div>
<div class="abs row rrow" style="top:1134px">
</div>
</div>
<div class="abs thumb" style="left:1404px;top:50px;width:12px;height:296px"></div>
</div>
</body></html>
